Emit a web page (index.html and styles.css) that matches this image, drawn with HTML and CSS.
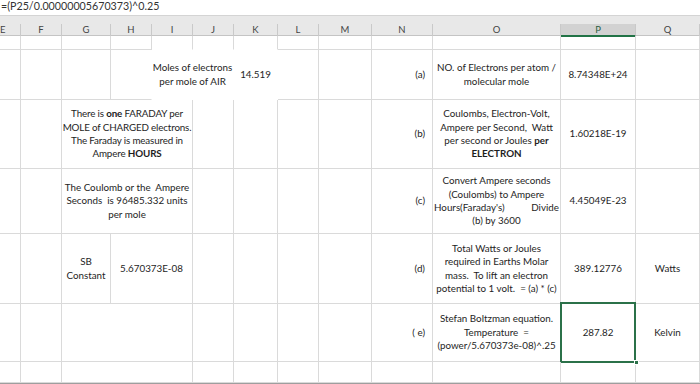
FILE: index.html
```html
<!DOCTYPE html>
<html>
<head>
<meta charset="utf-8">
<link rel="stylesheet" href="styles.css">
</head>
<body>
<div class="formula">=(P25/0.00000005670373)^0.25</div>
<div class="band"></div>
<div class="headers">
  <div class="h first">E</div><div class="h">F</div><div class="h">G</div><div class="h">H</div><div class="h">I</div><div class="h">J</div><div class="h">K</div><div class="h">L</div><div class="h">M</div><div class="h">N</div><div class="h">O</div><div class="h sel">P</div><div class="h">Q</div>
</div>
<div class="sheet">
  <!-- row 1 -->
  <div class="c"></div><div class="c"></div><div class="c"></div><div class="c"></div><div class="c nb"></div><div class="c nb"></div><div class="c nb"></div><div class="c"></div><div class="c"></div><div class="c"></div><div class="c"></div><div class="c"></div><div class="c"></div>
  <!-- row 2 -->
  <div class="c"></div><div class="c"></div><div class="c"></div>
  <div class="c nr"></div>
  <div class="c s2 nr nb"><div class="t">Moles of electrons<br>per mole of AIR</div></div>
  <div class="c nr nb"><div class="t">14.519</div></div>
  <div class="c"></div><div class="c"></div>
  <div class="c lbl">(a)</div>
  <div class="c"><div class="t">NO. of Electrons per atom /<br>molecular mole</div></div>
  <div class="c"><div class="t">8.74348E+24</div></div>
  <div class="c"></div>
  <!-- row 3 -->
  <div class="c"></div><div class="c"></div>
  <div class="c s3 tight"><div class="t">There is <b>one</b> FARADAY per<br>MOLE of CHARGED electrons.<br>The Faraday is measured in<br>Ampere <b>HOURS</b></div></div>
  <div class="c"></div><div class="c"></div><div class="c"></div><div class="c"></div>
  <div class="c lbl">(b)</div>
  <div class="c"><div class="t">Coulombs, Electron-Volt,<br>Ampere per Second,&nbsp; Watt<br>per second or Joules <b>per</b><br><b>ELECTRON</b></div></div>
  <div class="c"><div class="t">1.60218E-19</div></div>
  <div class="c"></div>
  <!-- row 4 -->
  <div class="c"></div><div class="c"></div>
  <div class="c s3"><div class="t">The Coulomb or the&nbsp; Ampere<br>Seconds&nbsp; is 96485.332 units<br>per mole</div></div>
  <div class="c"></div><div class="c"></div><div class="c"></div><div class="c"></div>
  <div class="c lbl">(c)</div>
  <div class="c wide"><div class="t">Convert Ampere seconds<br>(Coulombs) to Ampere<span class="spread"><span>Hours(Faraday's)</span><span>Divide</span></span>(b) by 3600</div></div>
  <div class="c"><div class="t">4.45049E-23</div></div>
  <div class="c"></div>
  <!-- row 5 -->
  <div class="c"></div><div class="c"></div>
  <div class="c"><div class="t">SB<br>Constant</div></div>
  <div class="c s2"><div class="t">5.670373E-08</div></div>
  <div class="c"></div><div class="c"></div><div class="c"></div><div class="c"></div>
  <div class="c lbl">(d)</div>
  <div class="c wide"><div class="t">Total Watts or Joules<br>required in Earths Molar<br>mass.&nbsp; To lift an electron<br>potential to 1 volt.&nbsp; = (a) * (c)</div></div>
  <div class="c"><div class="t">389.12776</div></div>
  <div class="c"><div class="t">Watts</div></div>
  <!-- row 6 -->
  <div class="c"></div><div class="c"></div>
  <div class="c s3"></div>
  <div class="c"></div><div class="c"></div><div class="c"></div><div class="c"></div>
  <div class="c lbl">( e)</div>
  <div class="c"><div class="t">Stefan Boltzman equation.<br>Temperature&nbsp; =<br>(power/5.670373e-08)^.25</div></div>
  <div class="c active"><div class="t">287.82</div><span class="handle"></span></div>
  <div class="c"><div class="t">Kelvin</div></div>
  <!-- row 7 -->
  <div class="c"></div><div class="c"></div>
  <div class="c s3"></div>
  <div class="c"></div><div class="c"></div><div class="c"></div><div class="c"></div><div class="c"></div><div class="c"></div><div class="c"></div><div class="c"></div>
</div>
</body>
</html>
```
FILE: styles.css
```css
* { box-sizing: border-box; }
html, body { margin: 0; padding: 0; background: #ffffff; }
body {
  width: 700px;
  height: 384px;
  overflow: hidden;
  font-family: Lato, "Liberation Sans", sans-serif;
  color: #1e1e1e;
}
.formula {
  height: 16px;
  border-bottom: 1px solid #d4d4d4;
  font-size: 10.7px;
  line-height: 12px;
  padding-left: 1px;
  color: #333;
}
.band {
  height: 8px;
  background: #e8e8e8;
}
.headers {
  display: grid;
  grid-template-columns: 21px 41px 49px 41px 41px 41px 44px 41px 53px 61px 128px 75px 64px;
  height: 12px;
  background: #e8e8e8;
  border-bottom: 1px solid #c4c4c4;
}
.h {
  border-right: 1px solid #c9c9c9;
  font-size: 9.5px;
  line-height: 11px;
  text-align: center;
  color: #444;
}
.h.first { text-align: left; padding-left: 0; }
.h.sel {
  background: #d2d2d2;
  border-bottom: 2px solid #217346;
  color: #2a5d3f;
}
.sheet {
  display: grid;
  grid-template-columns: 21px 41px 49px 41px 41px 41px 44px 41px 53px 61px 128px 75px 64px;
  grid-template-rows: 14px 50px 69px 65px 70px 58px 21px;
  border-bottom: 1px solid #9e9e9e;
}
.c {
  border-right: 1px solid #dadada;
  border-bottom: 1px solid #dadada;
  display: flex;
  align-items: center;
  justify-content: center;
  text-align: center;
  font-size: 9.8px;
  line-height: 13.4px;
  padding: 0 1px;
  position: relative;
  min-width: 0;
}
.c.nr { border-right-color: transparent; }
.c.nb { border-bottom-color: transparent; }
.s2 { grid-column: span 2; }
.s3 { grid-column: span 3; }
.tight { letter-spacing: -0.15px; }
.lbl {
  justify-content: flex-end;
  padding-right: 7px;
}
.t { white-space: nowrap; }
.wide .t { width: 100%; }
.spread {
  display: flex;
  justify-content: space-between;
}
.active::after {
  content: "";
  position: absolute;
  left: -1px;
  top: -2px;
  right: -1px;
  bottom: -2px;
  border: 2px solid #2b7149;
}
.handle {
  position: absolute;
  right: -4px;
  bottom: -4px;
  width: 5px;
  height: 5px;
  background: #2b7149;
  border: 1px solid #fff;
  z-index: 2;
}
```
